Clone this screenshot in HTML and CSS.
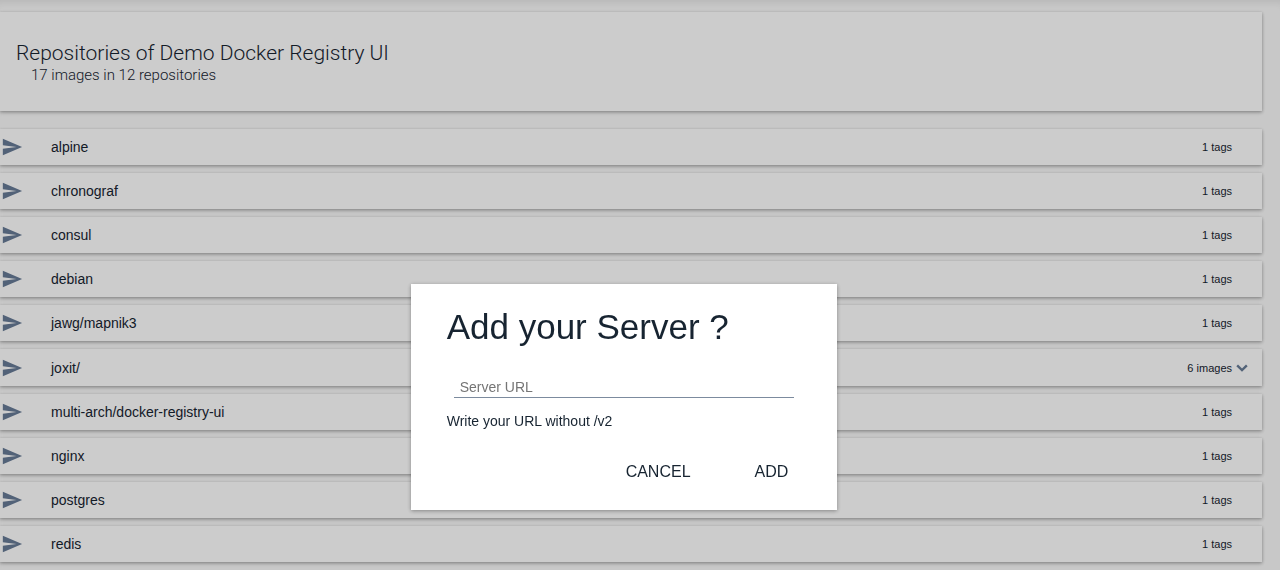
FILE: index.html
```html
<!DOCTYPE html>
<html lang="en">
<head>
<meta charset="utf-8">
<title>Docker Registry UI</title>
<link rel="stylesheet" href="styles.css">
</head>
<body>
<svg class="symbols" aria-hidden="true">
  <symbol id="send" viewBox="0 0 24 24"><path d="M2 21l21-9L2 3v7l15 2-15 2z"/></symbol>
  <symbol id="expand" viewBox="0 0 24 24"><path d="M16.8 7.8L12 12.6 7.2 7.8 5.2 9.8l6.8 6.8 6.8-6.8z"/></symbol>
</svg>
<main class="page">
  <header class="card heading">
    <h1 class="heading-title">Repositories of Demo Docker Registry UI</h1>
    <p class="heading-count">17 images in 12 repositories</p>
  </header>
  <ul class="list">
    <li class="card row"><svg class="send"><use href="#send"/></svg><span class="name">alpine</span><span class="tags">1 tags</span></li>
    <li class="card row"><svg class="send"><use href="#send"/></svg><span class="name">chronograf</span><span class="tags">1 tags</span></li>
    <li class="card row"><svg class="send"><use href="#send"/></svg><span class="name">consul</span><span class="tags">1 tags</span></li>
    <li class="card row"><svg class="send"><use href="#send"/></svg><span class="name">debian</span><span class="tags">1 tags</span></li>
    <li class="card row"><svg class="send"><use href="#send"/></svg><span class="name">jawg/mapnik3</span><span class="tags">1 tags</span></li>
    <li class="card row"><svg class="send"><use href="#send"/></svg><span class="name">joxit/</span><span class="tags">6 images</span><button class="toggle" type="button" aria-label="Expand joxit"><svg class="chevron"><use href="#expand"/></svg></button></li>
    <li class="card row"><svg class="send"><use href="#send"/></svg><span class="name">multi-arch/docker-registry-ui</span><span class="tags">1 tags</span></li>
    <li class="card row"><svg class="send"><use href="#send"/></svg><span class="name">nginx</span><span class="tags">1 tags</span></li>
    <li class="card row"><svg class="send"><use href="#send"/></svg><span class="name">postgres</span><span class="tags">1 tags</span></li>
    <li class="card row"><svg class="send"><use href="#send"/></svg><span class="name">redis</span><span class="tags">1 tags</span></li>
  </ul>
</main>
<div class="overlay">
  <form class="dialog" role="dialog" aria-labelledby="dialog-title">
    <h2 class="dialog-title" id="dialog-title">Add your Server ?</h2>
    <input class="field" type="text" placeholder="Server URL" aria-label="Server URL" aria-describedby="hint">
    <p class="hint" id="hint">Write your URL without /v2</p>
    <div class="actions">
      <button class="action" type="button">CANCEL</button>
      <button class="action" type="button">ADD</button>
    </div>
  </form>
</div>
</body>
</html>
```

FILE: styles.css
```css
* {
  box-sizing: border-box;
}

body {
  margin: 0;
  background: #fbfbfb;
  color: #172431;
  font-family: "Liberation Sans", Arial, sans-serif;
  font-size: 14px;
}

h1, h2, p, ul {
  margin: 0;
  padding: 0;
}

.symbols {
  display: none;
}

.page {
  display: flex;
  flex-direction: column;
  gap: 18px;
  min-height: 100vh;
  padding: 12px 18px 8px 0;
  box-shadow: inset 0 8px 8px -6px rgba(0, 0, 0, 0.1);
}

.card {
  background: #fff;
  box-shadow: 0 1px 3px rgba(0, 0, 0, 0.3), 0 2px 5px rgba(0, 0, 0, 0.1);
}

.heading {
  padding: 29px 16px 26px;
  font-family: Roboto, sans-serif;
  font-weight: 300;
}

.heading-title {
  font-size: 21px;
  font-weight: 300;
  line-height: 25px;
}

.heading-count {
  padding-left: 15px;
  font-size: 15px;
  line-height: 19px;
}

.list {
  display: grid;
  flex: 1;
  grid-auto-rows: minmax(36px, 1fr);
  gap: 8px;
  list-style: none;
}

.row {
  display: flex;
  align-items: center;
  padding: 0 30px 0 1px;
}

.send {
  width: 22px;
  height: 22px;
  margin-right: 28px;
  fill: #677b96;
}

.name {
  flex: 1;
}

.tags {
  font-size: 11px;
}

.toggle {
  display: flex;
  margin-right: -20px;
  padding: 0;
  border: 0;
  background: none;
}

.chevron {
  width: 20px;
  height: 20px;
  fill: #677b96;
}

.overlay {
  position: fixed;
  inset: 0;
  display: flex;
  align-items: flex-start;
  justify-content: center;
  padding: 284px 32px 0 0;
  background: rgba(0, 0, 0, 0.2);
}

.dialog {
  width: calc(100vw / 3);
  min-width: 320px;
  padding: 20px 36px;
  background: #fff;
  box-shadow: 0 1px 4px rgba(0, 0, 0, 0.35);
}

.dialog-title {
  font-size: 35px;
  font-weight: 400;
  line-height: 45px;
}

.field {
  display: block;
  width: calc(100% - 14px);
  height: 22px;
  margin: 27px 7px 0;
  padding: 0 6px;
  border: 0;
  border-bottom: 1px solid #7c8b9e;
  background: none;
  color: inherit;
  font: inherit;
}

.field::placeholder {
  color: #757575;
}

.hint {
  margin-top: 13px;
  line-height: 20px;
}

.actions {
  display: flex;
  justify-content: flex-end;
  gap: 32px;
  margin: 23px -3px 0 0;
}

.action {
  padding: 0 16px;
  border: 0;
  background: none;
  color: inherit;
  font: inherit;
  font-size: 16px;
  line-height: 36px;
}
```
